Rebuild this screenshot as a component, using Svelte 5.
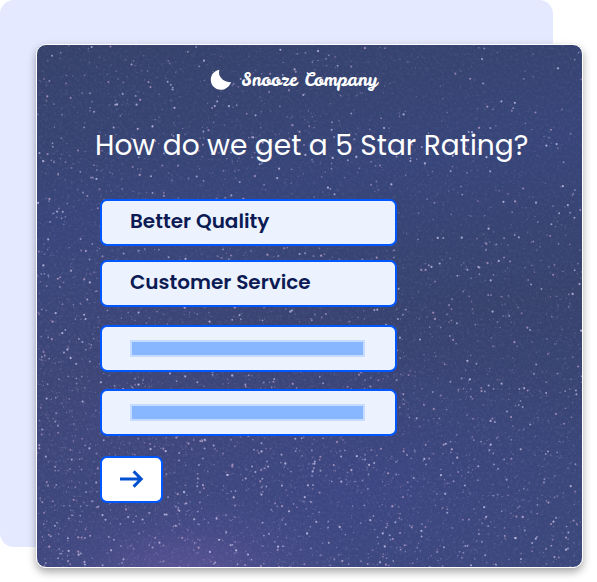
<script>
  const options = [
    { label: 'Better Quality' },
    { label: 'Customer Service' },
    { label: '' },
    { label: '' }
  ];

  // Small seeded generator, so the sky is the same on every load.
  function makeRandom(seed) {
    let s = seed;
    return () => {
      s = (s + 0x6d2b79f5) | 0;
      let t = Math.imul(s ^ (s >>> 15), 1 | s);
      t = (t + Math.imul(t ^ (t >>> 7), 61 | t)) ^ t;
      return ((t ^ (t >>> 14)) >>> 0) / 4294967296;
    };
  }

  const random = makeRandom(42);
  const stars = [];
  while (stars.length < 7500) {
    const x = random() * 546;
    const y = random() * 524;
    // Denser towards the lower left, where the galaxy glows.
    const density = 0.35 + 0.6 * (y / 524) - 0.25 * (x / 546);
    if (random() > density) continue;
    const glow = Math.pow(random(), 4);
    stars.push({
      x: x.toFixed(1),
      y: y.toFixed(1),
      r: (0.6 + glow * 0.55).toFixed(2),
      o: (0.14 + glow * 0.62).toFixed(2),
      c: random() > 0.4 ? '#d4cdf2' : '#c6a6cf'
    });
  }
</script>

<main class="page">
  <div class="backdrop"></div>

  <section class="card">
    <svg class="sky" viewBox="0 0 546 524" preserveAspectRatio="xMidYMid slice" aria-hidden="true">
      <filter id="grain" x="0" y="0" width="100%" height="100%">
        <feTurbulence type="fractalNoise" baseFrequency="0.35" numOctaves="2" seed="7" />
        <feColorMatrix values="0 0 0 0 0.6  0 0 0 0 0.55  0 0 0 0 0.8  1.4 0 0 0 -0.6" />
      </filter>
      <rect width="546" height="524" filter="url(#grain)" opacity="0.12" />
      {#each stars as s}
        <circle cx={s.x} cy={s.y} r={s.r} fill={s.c} opacity={s.o} />
      {/each}
    </svg>

    <div class="content">
      <header class="brand">
        <svg width="22" height="22" viewBox="0 0 22 22" aria-hidden="true">
          <path d="M9.4 .8C8.4 4 9.2 7.2 11.6 9.6C14 12.2 17.6 13.6 21 13C19.6 17.6 15.6 20.8 10.8 20.8C5.2 20.8 .8 16.4 .8 10.8C.8 5.7 4.5 1.5 9.4 .8Z" fill="#fff" />
        </svg>
        <span>Snooze Company</span>
      </header>

      <h1>How do we get a 5 Star Rating?</h1>

      <form class="answers" onsubmit={(e) => e.preventDefault()}>
        <div class="group filled">
          {#each options.filter((o) => o.label) as option}
            <button type="button" class="option">{option.label}</button>
          {/each}
        </div>
        <div class="group">
          {#each options.filter((o) => !o.label) as _, i}
            <button type="button" class="option blank" aria-label={`Option ${i + 3}`}>
              <span class="bar"></span>
            </button>
          {/each}
        </div>
        <button type="submit" class="next" aria-label="Next">
          <svg width="24" height="18" viewBox="0 0 24 18" fill="none" stroke="#0050d0" stroke-width="3" aria-hidden="true">
            <path d="M0 9H21M13.6 1.4L21.2 9L13.6 16.6" />
          </svg>
        </button>
      </form>
    </div>
  </section>
</main>

<style>
  .page {
    position: relative;
    padding: 44px 14px 14px 36px;
    background: #fff;
    font-family: Poppins, Inter, sans-serif;
  }

  .backdrop {
    position: absolute;
    inset: 0 44px 35px 0;
    border-radius: 14px;
    background: #e4e9ff;
  }

  .card {
    position: relative;
    overflow: hidden;
    border: 1px solid #fff;
    border-radius: 10px;
    background:
      radial-gradient(ellipse 180px 80px at 27% 101%, rgba(108, 90, 164, 0.6), rgba(90, 84, 155, 0.25) 55%, transparent),
      radial-gradient(ellipse 300px 260px at 12% 72%, rgba(74, 76, 142, 0.4), transparent),
      radial-gradient(ellipse 260px 200px at 60% 85%, rgba(66, 72, 146, 0.4), transparent),
      linear-gradient(170deg, #36426a 0%, #37457a 30%, #37426d 55%, #394577 80%, #3b487a 100%);
    box-shadow: 0 4px 8px rgba(0, 0, 0, 0.35);
  }

  .sky {
    position: absolute;
    inset: 0;
    width: 100%;
    height: 100%;
  }

  .content {
    position: relative;
    padding: 22px 50px 64px 58px;
  }

  .brand {
    display: flex;
    align-items: center;
    justify-content: center;
    gap: 10px;
    height: 26px;
    padding-right: 40px;
    color: #fff;
    font: 400 18px/26px "Leckerli One", Pacifico, "Liberation Serif", cursive;
  }

  h1 {
    margin: 33px 0;
    color: #fff;
    font-size: 28px;
    font-weight: 400;
    line-height: 40px;
    white-space: nowrap;
  }

  .answers {
    display: flex;
    flex-direction: column;
    gap: 18px;
    padding-left: 5px;
  }

  .group {
    display: flex;
    flex-direction: column;
    gap: 17px;
  }

  .group.filled {
    gap: 14px;
  }

  .option,
  .next {
    box-sizing: border-box;
    height: 47px;
    border: 2px solid #0057ff;
    border-radius: 7px;
    cursor: pointer;
  }

  .option {
    width: 70%;
    max-width: 297px;
    padding: 0 28px 3px;
    background: #ecf3ff;
    color: #0c1b54;
    font: 600 20px/28px Poppins, Inter, sans-serif;
    text-align: left;
  }

  .option.blank {
    padding: 0 30px 0 28px;
  }

  .bar {
    display: block;
    box-sizing: border-box;
    height: 17px;
    border: 2px solid #c5dbff;
    border-radius: 1px;
    background: #88b6ff;
  }

  .next {
    display: flex;
    align-items: center;
    justify-content: center;
    width: 63px;
    margin-top: 2px;
    padding: 0 0 2px;
    background: #fff;
  }
</style>
